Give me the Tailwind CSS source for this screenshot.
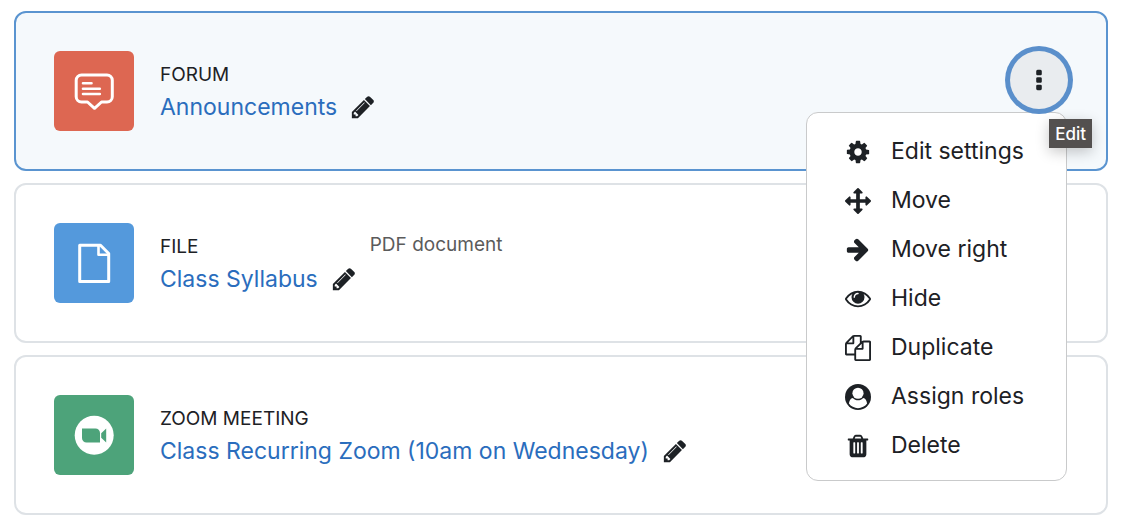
<!DOCTYPE html>
<html lang="en">
<head>
    <meta charset="UTF-8">
    <meta name="viewport" content="width=device-width, initial-scale=1.0">
    <title>Course activities</title>
    <script src="https://cdn.jsdelivr.net/npm/@tailwindcss/browser@4"></script>
</head>
<body class="bg-white font-['Inter',sans-serif] text-[#1d2125]">
    <!-- Shared icons -->
    <svg class="hidden" aria-hidden="true">
        <symbol id="pencil" viewBox="0 0 1792 1792"><path d="M491 1536l91-91-235-235-91 91v107h128v128h107zm523-928q0-22-22-22-10 0-17 7l-542 542q-7 7-7 17 0 22 22 22 10 0 17-7l542-542q7-7 7-17zm-54-192l416 416-832 832h-416v-416zm683 96q0 53-37 90l-166 166-416-416 166-165q36-38 90-38 53 0 91 38l235 234q37 39 37 91z"/></symbol>
    </svg>

    <main class="flex flex-col gap-3 pt-[11px] pl-3.5 pr-[22px]">
        <!-- Forum -->
        <section class="flex items-start gap-[26px] rounded-xl border-2 border-[#5a94d0] bg-[#f5f9fc] p-[38px]">
            <div class="flex size-20 shrink-0 items-center justify-center rounded-md bg-[#dd6752]">
                <svg class="size-12" viewBox="0 0 48 48" fill="none" stroke="#fff" stroke-width="3" stroke-linejoin="round" stroke-linecap="round">
                    <path d="M11.5 8h25.5a5.3 5.3 0 0 1 5.3 5.3v16.4a5.3 5.3 0 0 1-5.3 5.3h-5.5l-7 6.3-7-6.3h-6a5.3 5.3 0 0 1-5.3-5.3v-16.4a5.3 5.3 0 0 1 5.3-5.3z"/>
                    <path stroke-width="2.6" d="M13 16.3h8.5M13 21.7h16.8M13 27h16.8"/>
                </svg>
            </div>
            <div class="pt-[9px]">
                <div class="text-[19px] leading-[30px] uppercase">Forum</div>
                <div class="flex items-center gap-[13px] text-[23px] leading-[34px]">
                    <a href="#" class="text-[#2a6dbd]">Announcements</a>
                    <button type="button" aria-label="Edit title"><svg class="size-[26px]" fill="currentColor"><use href="#pencil"/></svg></button>
                </div>
            </div>

            <!-- Actions -->
            <div class="relative ml-auto">
                <button type="button" aria-label="Edit" aria-expanded="true" class="relative z-20 flex size-[58px] items-center justify-center rounded-full bg-[#e9ecef] ring-[5px] ring-[#5a8fcb]">
                    <svg class="size-[26px]" viewBox="0 0 1792 1792" fill="currentColor"><path d="M1088 1312v192q0 40-28 68t-68 28h-192q-40 0-68-28t-28-68v-192q0-40 28-68t68-28h192q40 0 68 28t28 68zm0-512v192q0 40-28 68t-68 28h-192q-40 0-68-28t-28-68v-192q0-40 28-68t68-28h192q40 0 68 28t28 68zm0-512v192q0 40-28 68t-68 28h-192q-40 0-68-28t-28-68v-192q0-40 28-68t68-28h192q40 0 68 28t28 68z"/></svg>
                </button>

                <div role="menu" class="absolute top-[61px] right-px z-10 w-[261px] rounded-xl border border-[#c9cacb] bg-white pt-3.5 pb-2.5 text-[23px]">
                    <button type="button" role="menuitem" class="flex h-[49px] w-full items-center gap-5 pl-[38px]">
                        <svg class="size-[26px] shrink-0" viewBox="0 0 1792 1792" fill="currentColor"><path d="M1152 896q0-106-75-181t-181-75-181 75-75 181 75 181 181 75 181-75 75-181zm512-109v222q0 12-8 23t-20 13l-185 28q-19 54-39 91 35 50 107 138 10 12 10 25t-9 23q-27 37-99 108t-94 71q-12 0-26-9l-138-108q-44 23-91 38-16 136-29 186-7 28-36 28h-222q-14 0-24.5-8.5t-11.5-21.5l-28-184q-49-16-90-37l-141 107q-10 9-25 9-14 0-25-11-126-114-165-168-7-10-7-23 0-12 8-23 15-21 51-66.5t54-70.5q-27-50-41-99l-183-27q-13-2-21-12.5t-8-23.5v-222q0-12 8-23t19-13l186-28q14-46 39-92-40-57-107-138-10-12-10-24 0-10 9-23 26-36 98.5-107.5t94.5-71.5q13 0 26 10l138 107q44-23 91-38 16-136 29-186 7-28 36-28h222q14 0 24.5 8.5t11.5 21.5l28 184q49 16 90 37l142-107q9-9 24-9 13 0 25 10 129 119 165 170 7 8 7 22 0 12-8 23-15 21-51 66.5t-54 70.5q26 50 41 98l183 28q13 2 21 12.5t8 23.5z"/></svg>
                        <span class="whitespace-nowrap">Edit settings</span>
                    </button>
                    <button type="button" role="menuitem" class="flex h-[49px] w-full items-center gap-5 pl-[38px]">
                        <svg class="size-[26px] shrink-0" viewBox="0 0 1792 1792" fill="currentColor"><path d="M1792 896q0 26-19 45l-256 256q-19 19-45 19t-45-19-19-45v-128h-384v384h128q26 0 45 19t19 45-19 45l-256 256q-19 19-45 19t-45-19l-256-256q-19-19-19-45t19-45 45-19h128v-384h-384v128q0 26-19 45t-45 19-45-19l-256-256q-19-19-19-45t19-45l256-256q19-19 45-19t45 19 19 45v128h384v-384h-128q-26 0-45-19t-19-45 19-45l256-256q19-19 45-19t45 19l256 256q19 19 19 45t-19 45-45 19h-128v384h384v-128q0-26 19-45t45-19 45 19l256 256q19 19 19 45z"/></svg>
                        <span class="whitespace-nowrap">Move</span>
                    </button>
                    <button type="button" role="menuitem" class="flex h-[49px] w-full items-center gap-5 pl-[38px]">
                        <svg class="size-[26px] shrink-0" viewBox="0 64 1792 1792" fill="currentColor"><path d="M1600 960q0 54-37 91l-651 651q-39 37-91 37-51 0-90-37l-75-75q-38-38-38-91t38-91l293-293h-704q-52 0-84.5-37.5t-32.5-90.5v-128q0-53 32.5-90.5t84.5-37.5h704l-293-294q-38-36-38-90t38-90l75-75q38-38 90-38 53 0 91 38l651 651q37 35 37 90z"/></svg>
                        <span class="whitespace-nowrap">Move right</span>
                    </button>
                    <button type="button" role="menuitem" class="flex h-[49px] w-full items-center gap-5 pl-[38px]">
                        <svg class="size-[26px] shrink-0" viewBox="0 64 1792 1792" fill="currentColor"><path d="M1664 960q-152-236-381-353 61 104 61 225 0 185-131.5 316.5t-316.5 131.5-316.5-131.5-131.5-316.5q0-121 61-225-229 117-381 353 133 205 333.5 326.5t434.5 121.5 434.5-121.5 333.5-326.5zm-720-384q0-20-14-34t-34-14q-125 0-214.5 89.5t-89.5 214.5q0 20 14 34t34 14 34-14 14-34q0-86 61-147t147-61q20 0 34-14t14-34zm848 384q0 34-20 69-140 230-376.5 368.5t-499.5 138.5-499.5-139-376.5-368q-20-35-20-69t20-69q140-229 376.5-368t499.5-139 499.5 139 376.5 368q20 35 20 69z"/></svg>
                        <span class="whitespace-nowrap">Hide</span>
                    </button>
                    <button type="button" role="menuitem" class="flex h-[49px] w-full items-center gap-5 pl-[38px]">
                        <svg class="size-[26px] shrink-0" viewBox="0 0 1792 1792" fill="currentColor"><path d="M1696 384q40 0 68 28t28 68v1216q0 40-28 68t-68 28h-960q-40 0-68-28t-28-68v-288h-544q-40 0-68-28t-28-68v-672q0-40 20-88t48-76l408-408q28-28 76-48t88-20h416q40 0 68 28t28 68v328q68-40 128-40h416zm-544 213l-299 299h299v-299zm-640-384l-299 299h299v-299zm196 647l316-316v-416h-384v416q0 40-28 68t-68 28h-416v640h512v-256q0-40 20-88t48-76zm956 804v-1152h-384v416q0 40-28 68t-68 28h-416v640h896z"/></svg>
                        <span class="whitespace-nowrap">Duplicate</span>
                    </button>
                    <button type="button" role="menuitem" class="flex h-[49px] w-full items-center gap-5 pl-[38px]">
                        <svg class="size-[26px] shrink-0" viewBox="0 0 1792 1792">
                            <circle cx="896" cy="896" r="896" fill="currentColor"/>
                            <path fill="#fff" d="M269 1339q22-155 87.5-257.5t184.5-118.5q67 74 159.5 115.5t195.5 41.5 195.5-41.5 159.5-115.5q119 16 184.5 118.5t87.5 257.5q-106 150-271 237.5t-356 87.5-356-87.5-271-237.5z"/>
                            <circle cx="896" cy="640" r="384" fill="#fff"/>
                        </svg>
                        <span class="whitespace-nowrap">Assign roles</span>
                    </button>
                    <button type="button" role="menuitem" class="flex h-[49px] w-full items-center gap-5 pl-[38px]">
                        <svg class="size-[26px] shrink-0" viewBox="0 0 1792 1792" fill="currentColor"><path d="M704 1376v-704q0-14-9-23t-23-9h-64q-14 0-23 9t-9 23v704q0 14 9 23t23 9h64q14 0 23-9t9-23zm256 0v-704q0-14-9-23t-23-9h-64q-14 0-23 9t-9 23v704q0 14 9 23t23 9h64q14 0 23-9t9-23zm256 0v-704q0-14-9-23t-23-9h-64q-14 0-23 9t-9 23v704q0 14 9 23t23 9h64q14 0 23-9t9-23zm-544-992h448l-48-117q-7-9-17-11h-317q-10 2-17 11zm928 32v64q0 14-9 23t-23 9h-96v948q0 83-47 143.5t-113 60.5h-832q-66 0-113-58.5t-47-141.5v-952h-96q-14 0-23-9t-9-23v-64q0-14 9-23t23-9h309l70-167q15-37 54-63t79-26h320q40 0 79 26t54 63l70 167h309q14 0 23 9t9 23z"/></svg>
                        <span class="whitespace-nowrap">Delete</span>
                    </button>
                </div>

                <div role="tooltip" class="absolute top-[68px] -right-6 z-30 bg-[#53504f] px-1.5 pt-px text-[17px] leading-7 font-medium text-white shadow-[0_4px_14px_rgba(0,0,0,0.22)]">Edit</div>
            </div>
        </section>

        <!-- File -->
        <section class="flex items-start gap-[26px] rounded-xl border-2 border-[#dee2e6] bg-white p-[38px]">
            <div class="flex size-20 shrink-0 items-center justify-center rounded-md bg-[#5499dc]">
                <svg class="size-12" viewBox="0 0 48 48" fill="none" stroke="#fff" stroke-width="3" stroke-linejoin="round">
                    <path d="M9.7 6.3h20.8l8.2 8.2v28h-29z"/>
                    <path stroke-width="2.6" d="M28.5 6.3v9.5h10.2"/>
                </svg>
            </div>
            <div class="pt-[9px]">
                <div class="text-[19px] leading-[30px] uppercase">File</div>
                <div class="flex items-center gap-[13px] text-[23px] leading-[34px]">
                    <a href="#" class="text-[#2a6dbd]">Class Syllabus</a>
                    <button type="button" aria-label="Edit title"><svg class="size-[26px]" fill="currentColor"><use href="#pencil"/></svg></button>
                </div>
            </div>
            <div class="-ml-[13px] pt-[7px] text-[19px] leading-[30px] text-[#5b5b5b]">PDF document</div>
        </section>

        <!-- Zoom meeting -->
        <section class="flex items-start gap-[26px] rounded-xl border-2 border-[#dee2e6] bg-white p-[38px]">
            <div class="flex size-20 shrink-0 items-center justify-center rounded-md bg-[#4da37a]">
                <svg class="size-12" viewBox="0 0 48 48">
                    <circle cx="24.2" cy="24.2" r="19.5" fill="#fff"/>
                    <path fill="#4da37a" d="M12 17.5h13.5a4.5 4.5 0 0 1 4.5 4.5v9.5h-13.5a4.5 4.5 0 0 1-4.5-4.5zM31.2 22.3l5-4.8v14l-5-4.8z"/>
                </svg>
            </div>
            <div class="pt-[9px]">
                <div class="text-[19px] leading-[30px] uppercase">Zoom meeting</div>
                <div class="flex items-center gap-[13px] text-[23px] leading-[34px]">
                    <a href="#" class="text-[#2a6dbd]">Class Recurring Zoom (10am on Wednesday)</a>
                    <button type="button" aria-label="Edit title"><svg class="size-[26px]" fill="currentColor"><use href="#pencil"/></svg></button>
                </div>
            </div>
        </section>
    </main>
</body>
</html>
